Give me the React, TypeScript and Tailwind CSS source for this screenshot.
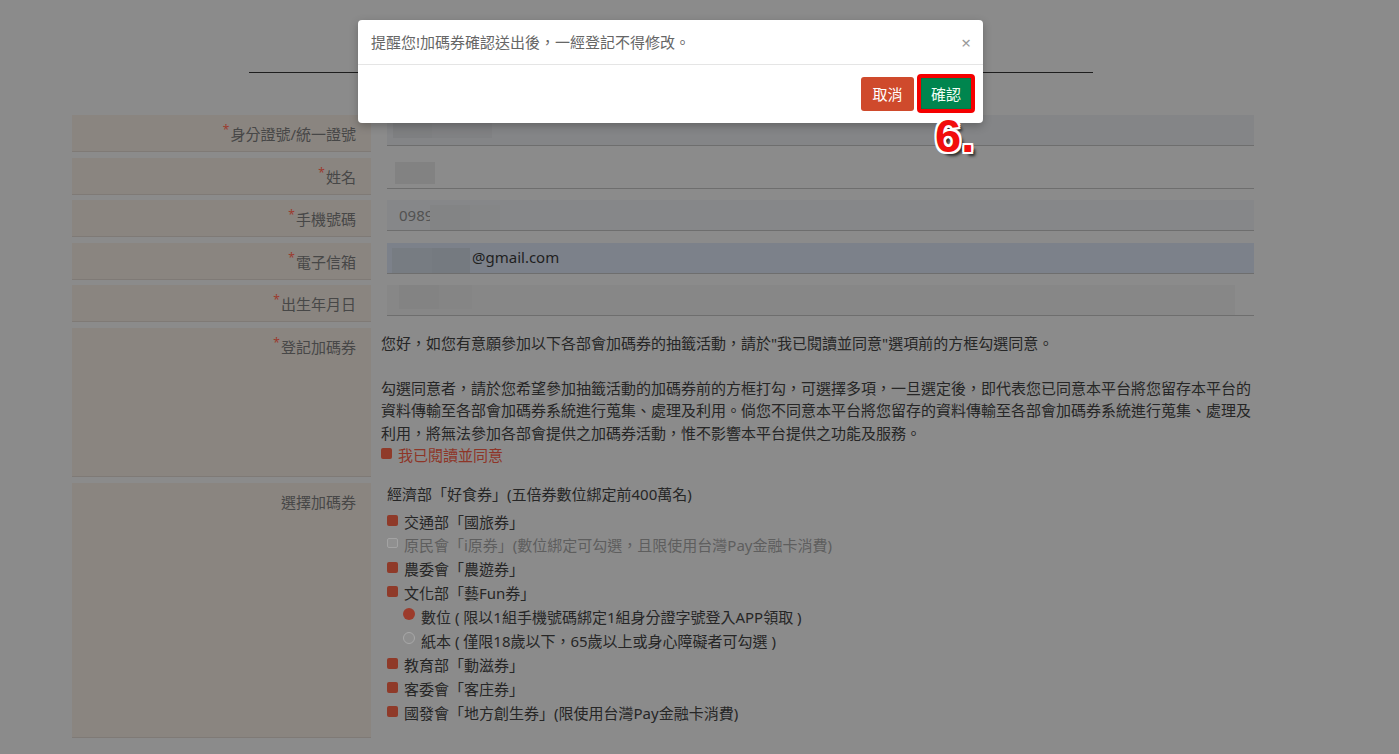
import type { ReactNode } from 'react'

// page behind the confirm dialog, already darkened by the backdrop
const FieldLabel = ({
  children,
  required = true,
}: {
  children: ReactNode
  required?: boolean
}) => (
  <div className="w-[299px] shrink-0 border-b border-[#7f7a76] bg-[#8a8580] pr-[15px] pt-[9px] text-right text-[15px] leading-[20px] text-[#474747]">
    {required && (
      <span className="relative -top-[6px] mr-[1px] text-[12px] text-[#9c3b2e]">
        *
      </span>
    )}
    {children}
  </div>
)

const InputRow = ({
  label,
  box,
  children,
}: {
  label: string
  box: string
  children?: ReactNode
}) => (
  <div className="flex h-[37px]">
    <FieldLabel>{label}</FieldLabel>
    <div className="flex-1 pl-[16px]">
      <div className="relative h-[31px] border-b border-[#6e6e6e]">
        <div className={box} />
        {children}
      </div>
    </div>
  </div>
)

const Check = ({ disabled = false }: { disabled?: boolean }) =>
  disabled ? (
    <span className="mt-[4px] h-[10px] w-[11px] shrink-0 rounded-[2px] border border-[#a3a3a3] bg-[#909090]" />
  ) : (
    <span className="mt-[4px] h-[11px] w-[11px] shrink-0 rounded-[2px] bg-[#8f3a29]" />
  )

const Radio = ({ on = false }: { on?: boolean }) =>
  on ? (
    <span className="mt-[2px] h-[12px] w-[12px] shrink-0 rounded-full bg-[#9c3b2b]" />
  ) : (
    <span className="mt-[2px] h-[12px] w-[12px] shrink-0 rounded-full border border-[#a8a8a8] bg-[#8e8e8e]" />
  )

const Option = ({
  children,
  disabled,
}: {
  children: ReactNode
  disabled?: boolean
}) => (
  <div
    className={`flex items-start gap-[6px] leading-[23.9px] ${disabled ? 'text-[#5e5e5e]' : 'text-[#262626]'}`}
  >
    <Check disabled={disabled} />
    <span>{children}</span>
  </div>
)

const SubOption = ({ children, on }: { children: ReactNode; on?: boolean }) => (
  <div className="flex items-start gap-[6px] pl-[16px] leading-[23.9px] text-[#262626]">
    <Radio on={on} />
    <span>{children}</span>
  </div>
)

export default function App() {
  return (
    <div className="relative h-[754px] w-full overflow-hidden bg-[#8b8b8b] pt-[72px] font-['Noto_Sans','Noto_Sans_CJK_TC',sans-serif]">
      <div className="ml-[249px] h-px w-[844px] bg-[#1e1e1e]" />

      <div className="ml-[72px] mt-[42px] flex w-[1182px] flex-col gap-[5.6px]">
        <InputRow label="身分證號/統一證號" box="h-full w-full bg-[#848587]">
          <div className="absolute left-[6px] top-[7px] h-[16px] w-[39px] bg-[#7e7f81]" />
          <div className="absolute left-[45px] top-[7px] h-[16px] w-[60px] bg-[#808183]" />
        </InputRow>

        <InputRow label="姓名" box="h-full w-full">
          <div className="absolute left-[8px] top-[4px] h-[22px] w-[40px] bg-[#828282]" />
        </InputRow>

        <InputRow label="手機號碼" box="h-full w-full bg-[#868789]">
          <span className="absolute left-[12px] top-[5px] text-[15px] leading-[20px] text-[#525252]">
            0989
          </span>
          <div className="absolute left-[43px] top-[5px] h-[25px] w-[40px] bg-[#838485]" />
          <div className="absolute left-[83px] top-[5px] h-[25px] w-[30px] bg-[#858687]" />
        </InputRow>

        <InputRow label="電子信箱" box="h-full w-full bg-[#7c818a]">
          <div className="absolute left-[5px] top-[5px] h-[25px] w-[40px] bg-[#777c82]" />
          <div className="absolute left-[45px] top-[5px] h-[25px] w-[38px] bg-[#757a80]" />
          <span className="absolute left-[85px] top-[4px] text-[15px] leading-[20px] text-[#1f1f1f]">
            @gmail.com
          </span>
        </InputRow>

        <InputRow label="出生年月日" box="h-full w-[848px] bg-[#878787]">
          <div className="absolute left-[12px] top-0 h-[24px] w-[40px] bg-[#838383]" />
          <div className="absolute left-[52px] top-0 h-[24px] w-[33px] bg-[#858585]" />
        </InputRow>

        {/* consent text */}
        <div className="flex h-[149px]">
          <FieldLabel>登記加碼券</FieldLabel>
          <div className="flex-1 pl-[10px] pt-[4px] text-[15px] leading-[22.5px] text-[#262626]">
            <p>您好，如您有意願參加以下各部會加碼券的抽籤活動，請於"我已閱讀並同意"選項前的方框勾選同意。</p>
            <p className="mt-[22.5px]">
              勾選同意者，請於您希望參加抽籤活動的加碼券前的方框打勾，可選擇多項，一旦選定後，即代表您已同意本平台將您留存本平台的資料傳輸至各部會加碼券系統進行蒐集、處理及利用。倘您不同意本平台將您留存的資料傳輸至各部會加碼券系統進行蒐集、處理及利用，將無法參加各部會提供之加碼券活動，惟不影響本平台提供之功能及服務。
            </p>
            <div className="flex items-start gap-[6px] text-[#8e3527]">
              <Check />
              <span>我已閱讀並同意</span>
            </div>
          </div>
        </div>

        {/* voucher picks */}
        <div className="flex h-[255px]">
          <FieldLabel required={false}>選擇加碼券</FieldLabel>
          <div className="flex-1 pl-[16px] text-[15px]">
            <p className="mb-[6px] leading-[22px] text-[#262626]">
              經濟部「好食券」(五倍券數位綁定前400萬名)
            </p>
            <Option>交通部「國旅券」</Option>
            <Option disabled>原民會「i原券」(數位綁定可勾選，且限使用台灣Pay金融卡消費)</Option>
            <Option>農委會「農遊券」</Option>
            <Option>文化部「藝Fun券」</Option>
            <SubOption on>數位 ( 限以1組手機號碼綁定1組身分證字號登入APP領取 )</SubOption>
            <SubOption>紙本 ( 僅限18歲以下，65歲以上或身心障礙者可勾選 )</SubOption>
            <Option>教育部「動滋券」</Option>
            <Option>客委會「客庄券」</Option>
            <Option>國發會「地方創生券」(限使用台灣Pay金融卡消費)</Option>
          </div>
        </div>
      </div>

      {/* confirm dialog */}
      <div className="absolute left-[358px] top-[20px] w-[625px] rounded-[4px] bg-white shadow-[0_3px_9px_rgba(0,0,0,0.25)]">
        <div className="flex h-[45px] items-center justify-between border-b border-[#e5e5e5] pl-[13px] pr-[12px]">
          <span className="text-[15px] text-[#666666]">
            提醒您!加碼券確認送出後，一經登記不得修改。
          </span>
          <button className="text-[17px] leading-none text-[#9a9a9a]">×</button>
        </div>
        <div className="flex justify-end gap-[5px] pb-[12px] pl-[10px] pr-[10px] pt-[12px]">
          <button className="h-[34px] w-[53px] rounded-[3px] bg-[#cf4a2c] text-[15px] text-white">
            取消
          </button>
          <div className="relative">
            <button className="h-[34px] w-[54px] rounded-[3px] bg-[#00854e] text-[15px] text-[#f2fff6]">
              確認
            </button>
            <div className="pointer-events-none absolute -bottom-[2px] -left-[2px] -right-[2px] -top-[3px] rounded-[4px] border-[4px] border-[#f50000] shadow-[inset_0_0_1px_rgba(0,0,0,0.6)]" />
            <span className="pointer-events-none absolute left-[16px] top-[35px] font-['Liberation_Sans',Arial,sans-serif] text-[47px] font-bold leading-none text-[#f20d0d] [text-shadow:-2px_-2px_0_#fff,2px_-2px_0_#fff,-2px_2px_0_#fff,2px_2px_0_#fff,0_-2px_0_#fff,0_2px_0_#fff,-2px_0_0_#fff,2px_0_0_#fff,4px_4px_3px_rgba(0,0,0,0.7)]">
              6.
            </span>
          </div>
        </div>
      </div>
    </div>
  )
}
